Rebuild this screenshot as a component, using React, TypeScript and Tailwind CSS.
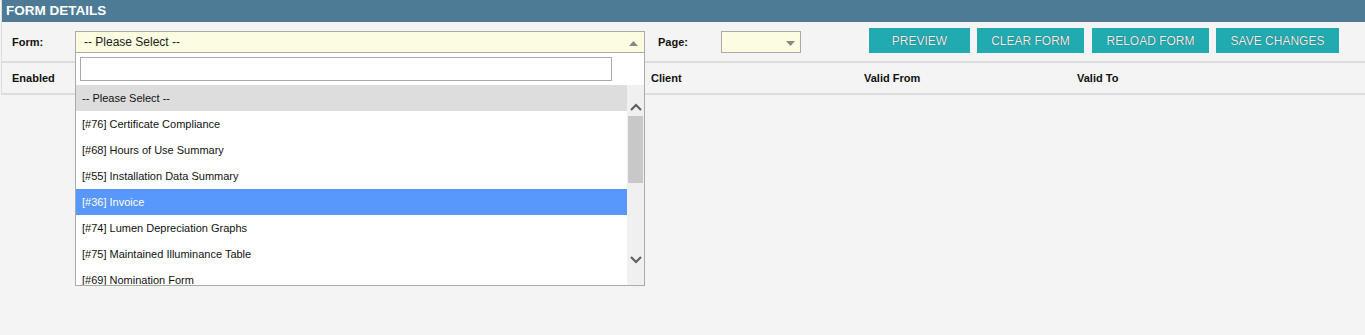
import React from "react";

const options = [
  "[#76] Certificate Compliance",
  "[#68] Hours of Use Summary",
  "[#55] Installation Data Summary",
  "[#36] Invoice",
  "[#74] Lumen Depreciation Graphs",
  "[#75] Maintained Illuminance Table",
  "[#69] Nomination Form",
];

const buttons = [
  { label: "PREVIEW", cls: "w-[101px]" },
  { label: "CLEAR FORM", cls: "w-[107px] ml-[7px]" },
  { label: "RELOAD FORM", cls: "w-[117px] ml-[8px]" },
  { label: "SAVE CHANGES", cls: "w-[123px] ml-[7px]" },
];

function Chevron({ up }: { up?: boolean }) {
  return (
    <svg width="12" height="8" viewBox="0 0 12 8" className="mx-auto">
      <path
        d={up ? "M1 7 L6 2 L11 7" : "M1 1 L6 6 L11 1"}
        fill="none"
        stroke="#606060"
        strokeWidth="2.2"
      />
    </svg>
  );
}

function FormDropdown() {
  return (
    <div className="absolute left-0 top-full z-10 w-full h-[233px] bg-white border-x border-b border-[#aaaaaa]">
      <div className="pt-[4px] pl-[4px]">
        <input
          type="text"
          className="block w-[532px] h-[24px] border border-[#aaaaaa] bg-white outline-none"
        />
      </div>
      <div className="mt-[4px] flex h-[200px] overflow-hidden">
        <ul className="flex-1">
          <li className="h-[26px] pl-[6px] flex items-center bg-[#dddddd] text-[11px] text-[#111]">
            -- Please Select --
          </li>
          {options.map((o) => (
            <li
              key={o}
              className={`h-[26px] pl-[6px] flex items-center text-[11px] ${
                o === "[#36] Invoice"
                  ? "bg-[#5897fb] text-white"
                  : "bg-white text-[#111]"
              }`}
            >
              {o}
            </li>
          ))}
        </ul>
        <div className="w-[17px] bg-[#f0f0f0] flex flex-col">
          <div className="h-[31px] flex items-end pb-[5px]">
            <Chevron up />
          </div>
          <div className="mx-[1px] h-[67px] bg-[#c8c8c8]" />
          <div className="flex-1" />
          <div className="h-[30px] flex items-start pt-[1px]">
            <Chevron />
          </div>
        </div>
      </div>
    </div>
  );
}

export default function App() {
  return (
    <div className="min-h-[335px] bg-[#f4f4f4] font-['Liberation_Sans',Arial,sans-serif] overflow-hidden">
      <div className="ml-px w-[1366px] border-l border-b-2 border-[#dddddd]">
        <div className="h-[22px] bg-[#4d7b95] flex items-center pl-[4px]">
          <span className="text-white font-bold text-[13.5px]">FORM DETAILS</span>
        </div>

        <div className="h-[41px] flex items-start pl-[10px] border-b-2 border-[#dddddd]">
          <div className="w-[63px] pt-[12px] text-[11px] font-bold text-[#111]">Form:</div>
          <div className="relative mt-[9px] w-[570px]">
            <div className="h-[22px] bg-[#fcfce0] border border-[#aaaaaa] flex items-center pl-[8px] pr-[6px]">
              <span className="flex-1 text-[12px] text-[#222]">-- Please Select --</span>
              <svg width="9" height="5" viewBox="0 0 9 5" className="mt-[2px]">
                <path d="M0 5 L4.5 0 L9 5 Z" fill="#888" />
              </svg>
            </div>
            <FormDropdown />
          </div>
          <div className="ml-[13px] w-[63px] pt-[12px] text-[11px] font-bold text-[#111]">Page:</div>
          <div className="mt-[9px] w-[80px] h-[22px] bg-[#fcfce0] border border-[#aaaaaa] flex items-center justify-end pr-[5px]">
            <svg width="9" height="5" viewBox="0 0 9 5" className="mt-[3px]">
              <path d="M0 0 L4.5 5 L9 0 Z" fill="#888" />
            </svg>
          </div>
          <div className="ml-[68px] mt-[6px] flex">
            {buttons.map((b) => (
              <button
                key={b.label}
                type="button"
                className={`${b.cls} h-[25px] bg-[#22aab1] text-[12px] text-[#f0f0f0] [text-shadow:0_0_1px_rgba(0,0,0,0.6)]`}
              >
                {b.label}
              </button>
            ))}
          </div>
        </div>

        <div className="h-[30px] flex items-center pl-[10px] text-[11px] font-bold text-[#111]">
          <div className="w-[639px]">Enabled</div>
          <div className="w-[213px]">Client</div>
          <div className="w-[213px]">Valid From</div>
          <div>Valid To</div>
        </div>
      </div>
    </div>
  );
}
